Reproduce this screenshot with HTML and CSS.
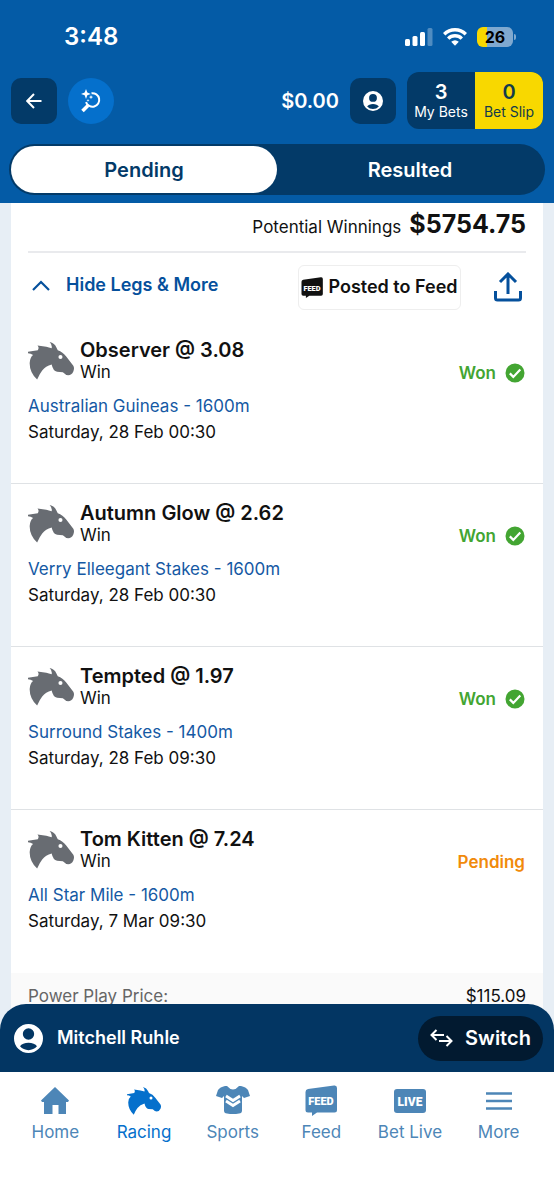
FILE: index.html
```html
<!DOCTYPE html>
<html lang="en">
<head>
<meta charset="utf-8">
<meta name="viewport" content="width=device-width, initial-scale=1">
<title>My Bets</title>
<link rel="stylesheet" href="styles.css">
</head>
<body>
<svg class="sprite" aria-hidden="true">
  <symbol id="horse" viewBox="0 0 136 112">
    <path fill="currentColor" d="M0 29L29 24Q34 16 28 10L54 14L70 18Q72 8 64 0Q79 4 84 16L88 24Q103 29 113 43L134 70Q138 77 134 87Q129 98 119 98Q112 98 103 89L86 88Q74 85 70 66Q52 70 42 84Q34 94 27 111Q4 89 5 61Q6 45 15 38Q8 33 0 33Z"/>
    <circle cx="96" cy="44" r="6" fill="#fff"/>
  </symbol>
  <symbol id="person" viewBox="0 0 24 24">
    <path fill="currentColor" fill-rule="evenodd" d="M12 0a12 12 0 1 0 0 24a12 12 0 0 0 0-24zM12 3.600a4.700 4.700 0 1 1 0 9.400a4.700 4.700 0 0 1 0-9.400zM5 18.500c2-4 12-4 14 0a9.400 9.400 0 0 1-14 0z"/>
  </symbol>
  <symbol id="tick" viewBox="0 0 20 20">
    <circle cx="10" cy="10" r="9.500" fill="#43a532"/>
    <path d="M4.800 10.400l3.500 3.500 7-7.300" fill="none" stroke="#fff" stroke-width="2.200"/>
  </symbol>
</svg>
<div class="app">
  <header class="header">
    <div class="status">
      <span class="clock">3:48</span>
      <div class="status-icons">
        <svg width="28" height="18" viewBox="0 0 28 18"><g fill="#fff"><rect y="11" width="5" height="7" rx="1.500"/><rect x="7.500" y="8" width="5" height="10" rx="1.500"/><rect x="15" y="4" width="5" height="14" rx="1.500"/><rect x="22.500" width="5" height="18" rx="1.500" opacity=".3"/></g></svg>
        <svg width="24" height="18" viewBox="0 0 24 18"><g fill="none" stroke="#fff" stroke-width="3.400"><path d="M1.200 6.200a15.500 15.500 0 0 1 21.600 0"/><path d="M5.200 10.600a9.700 9.700 0 0 1 13.600 0"/></g><path d="M8.200 13.800q3.800-3.200 7.600 0L12 17.800z" fill="#fff"/></svg>
        <div class="power"><span class="battery">26</span><i class="cap"></i></div>
      </div>
    </div>
    <div class="toolbar">
      <button class="square" aria-label="Back"><svg width="16" height="16" viewBox="0 0 16 16"><path d="M15.500 8H1.500M8 1L1.200 8L8 15" fill="none" stroke="#fff" stroke-width="2"/></svg></button>
      <button class="square round" aria-label="Search"><svg width="20" height="24" viewBox="0 0 20 24"><g fill="none" stroke="#fff"><path d="M10.500 4.200a6.800 6.800 0 1 1-5.500 9" stroke-width="2"/><path d="M7 16.500L1.500 22" stroke-width="3.600"/></g><path fill="#fff" d="M5 0l1.300 3.500L9.800 5 6.300 6.300 5 10 3.700 6.300 0 5l3.700-1.500zM10 6l.6 1.500 1.500.6-1.500.6-.6 1.500-.6-1.500-1.500-.6 1.500-.6zM7 9.800l.4 1.200 1.200.4-1.200.4L7 13l-.4-1.200-1.200-.4 1.200-.4z"/></svg></button>
      <span class="balance">$0.00</span>
      <button class="square" aria-label="Account"><svg width="20" height="20"><use href="#person"/></svg></button>
      <div class="bets">
        <button class="bet-tab"><strong>3</strong>My Bets</button>
        <button class="bet-tab slip"><strong>0</strong>Bet Slip</button>
      </div>
    </div>
    <nav class="tabs">
      <button class="tab active">Pending</button>
      <button class="tab">Resulted</button>
    </nav>
  </header>
  <main class="main">
    <article class="card">
      <div class="winnings">Potential Winnings <strong>$5754.75</strong></div>
      <div class="actions">
        <button class="hide"><svg width="18" height="11" viewBox="0 0 18 11"><path d="M1 10L9 2l8 8" fill="none" stroke="currentColor" stroke-width="2.200"/></svg>Hide Legs &amp; More</button>
        <button class="posted"><svg width="22" height="21" viewBox="0 0 32 31"><path fill="currentColor" d="M3 4L29 .5Q32 0 32 3V25Q32 27.500 29.500 27.500H12L7 31V27.500H3Q.5 27.500.5 25V7Q.5 4.500 3 4Z"/><text class="badge-text" x="16" y="20" text-anchor="middle">FEED</text></svg>Posted to Feed</button>
        <button class="share" aria-label="Share"><svg width="28" height="30" viewBox="0 0 28 30"><path d="M14 22V2M6 10l8-8 8 8M1.500 19v7q0 2 2 2h21q2 0 2-2v-7" fill="none" stroke="currentColor" stroke-width="3"/></svg></button>
      </div>
      <section class="leg">
        <div class="leg-top"><svg class="horse"><use href="#horse"/></svg><div><h2>Observer @ 3.08</h2><p class="kind">Win</p></div><span class="result">Won<svg width="20" height="20"><use href="#tick"/></svg></span></div>
        <a href="#">Australian Guineas - 1600m</a><p class="when">Saturday, 28 Feb 00:30</p>
      </section>
      <section class="leg">
        <div class="leg-top"><svg class="horse"><use href="#horse"/></svg><div><h2>Autumn Glow @ 2.62</h2><p class="kind">Win</p></div><span class="result">Won<svg width="20" height="20"><use href="#tick"/></svg></span></div>
        <a href="#">Verry Elleegant Stakes - 1600m</a><p class="when">Saturday, 28 Feb 00:30</p>
      </section>
      <section class="leg">
        <div class="leg-top"><svg class="horse"><use href="#horse"/></svg><div><h2>Tempted @ 1.97</h2><p class="kind">Win</p></div><span class="result">Won<svg width="20" height="20"><use href="#tick"/></svg></span></div>
        <a href="#">Surround Stakes - 1400m</a><p class="when">Saturday, 28 Feb 09:30</p>
      </section>
      <section class="leg">
        <div class="leg-top"><svg class="horse"><use href="#horse"/></svg><div><h2>Tom Kitten @ 7.24</h2><p class="kind">Win</p></div><span class="result waiting">Pending</span></div>
        <a href="#">All Star Mile - 1600m</a><p class="when">Saturday, 7 Mar 09:30</p>
      </section>
      <div class="price"><span>Power Play Price:</span><b>$115.09</b></div>
    </article>
  </main>
  <footer class="footer">
    <div class="account">
      <svg width="29" height="29"><use href="#person"/></svg>
      <span class="name">Mitchell Ruhle</span>
      <button class="switch"><svg width="23" height="18" viewBox="0 0 23 18"><path d="M14 6H1.500M6.500 1l-5 5 5 5M9 12h12.500M16.500 7l5 5-5 5" fill="none" stroke="currentColor" stroke-width="2"/></svg>Switch</button>
    </div>
    <nav class="nav">
      <a href="#"><svg width="28" height="28" viewBox="0 0 28 28"><path fill="currentColor" d="M14 0l14 13.500-1 1.500h-2v12h-7.500v-9h-6v9H3V15H1l-1-1.500z"/></svg>Home</a>
      <a href="#" class="current"><svg width="34" height="28"><use href="#horse"/></svg>Racing</a>
      <a href="#"><svg width="34" height="29" viewBox="0 0 34 29"><path fill="currentColor" d="M9 0h2q6 7 12 0h2q5 1 7 4l2 6-6 2-2-2v14.500q0 3-3 3-6 1-12 0-3 0-3-3V10l-2 2-6-2 2-6q2-3 7-4z"/><path d="M10 10l7 4.500 7-4.500M10 15l7 4.500 7-4.500" fill="none" stroke="#fff" stroke-width="2.800"/></svg>Sports</a>
      <a href="#"><svg width="32" height="31" viewBox="0 0 32 31"><path fill="currentColor" d="M3 4L29 .5Q32 0 32 3V25Q32 27.500 29.500 27.500H12L7 31V27.500H3Q.5 27.500.5 25V7Q.5 4.500 3 4Z"/><text class="badge-text" x="16" y="20" text-anchor="middle">FEED</text></svg>Feed</a>
      <a href="#"><svg width="32" height="24" viewBox="0 0 32 24"><rect width="32" height="24" rx="3" fill="currentColor"/><text class="badge-text live" x="16" y="17" text-anchor="middle">LIVE</text></svg>Bet Live</a>
      <a href="#"><svg width="26" height="18" viewBox="0 0 26 18"><path d="M0 1.500h26M0 9h26M0 16.500h26" stroke="currentColor" stroke-width="2.400"/></svg>More</a>
    </nav>
  </footer>
</div>
</body>
</html>
```
FILE: styles.css
```css
* { box-sizing: border-box; }
body { margin: 0; font-family: Inter, "Liberation Sans", sans-serif; font-size: 17px; line-height: 20px; color: #111; }
button { border: 0; padding: 0; background: none; color: inherit; font: inherit; cursor: pointer; }
a { text-decoration: none; color: inherit; }
h2, p { margin: 0; }
svg { flex: none; display: block; }
.sprite { position: absolute; width: 0; height: 0; }
.app { display: flex; flex-direction: column; height: 100vh; background: #e7eef5; }
.header { flex: none; background: #045ba6; color: #fff; padding-bottom: 8px; }
.status { display: flex; align-items: center; justify-content: space-between; height: 72px; padding: 2px 38px 0 64px; }
.clock { font-size: 24px; font-weight: 600; }
.status-icons { display: flex; align-items: center; gap: 10px; }
.power { display: flex; align-items: center; gap: 1px; }
.cap { width: 2px; height: 6px; border-radius: 0 2px 2px 0; background: #7fa9d0; }
.battery { width: 36px; height: 20px; border-radius: 6px; background: linear-gradient(90deg, #f8d800 10px, #7fa9d0 10px); color: #000; font-size: 16px; font-weight: 700; text-align: center; }
.toolbar { display: flex; align-items: center; height: 57px; padding: 0 11px; gap: 11px; }
.square { display: grid; place-items: center; width: 46px; height: 46px; border-radius: 10px; background: #033a68; }
.round { border-radius: 50%; background: #0570cc; }
.balance { margin-left: auto; font-size: 20px; font-weight: 600; }
.bets { display: flex; height: 57px; border-radius: 12px; overflow: hidden; background: #033a68; }
.bet-tab { display: flex; flex-direction: column; align-items: center; justify-content: center; width: 68px; font-size: 14px; line-height: 18px; }
.bet-tab strong { font-size: 20px; line-height: 22px; font-weight: 600; }
.slip { background: #f8d800; color: #123b4c; }
.tabs { display: flex; height: 51px; margin: 15px 9px 0; padding: 2px; border-radius: 26px; background: #033a68; }
.tab { flex: 1; border-radius: 24px; font-size: 20px; font-weight: 600; }
.tab.active { background: #fff; color: #033a68; }
.main { flex: 1; min-height: 0; overflow: hidden; padding: 0 11px; }
.card { background: #fff; }
.winnings { margin: 0 17px; height: 50px; padding-top: 5px; border-bottom: 2px solid #e9eaed; display: flex; align-items: baseline; justify-content: flex-end; gap: 8px; line-height: 32px; }
.winnings strong { font-size: 25px; font-weight: 700; }
.actions { display: flex; align-items: center; height: 68px; padding: 0 21px; color: #05509c; font-size: 18px; font-weight: 600; }
.hide { display: flex; align-items: center; gap: 16px; margin-right: auto; padding-bottom: 4px; }
.posted { display: flex; align-items: center; justify-content: center; gap: 5px; width: 163px; height: 45px; border: 1px solid #eee; border-radius: 6px; color: #111; white-space: nowrap; }
.share { margin-left: 33px; }
.leg { height: 163px; padding: 17px 17px 0; border-bottom: 1px solid #dfe2e5; }
.leg:nth-last-child(2) { border-bottom: 0; }
.leg-top { display: flex; height: 55px; gap: 6px; }
.horse { width: 46px; height: 38px; margin-top: 4px; color: #686c72; }
.leg h2 { font-size: 20px; line-height: 24px; font-weight: 600; }
.leg a { display: block; color: #1559a4; line-height: 26px; }
.when { line-height: 26px; }
.result { display: flex; align-items: center; gap: 9px; height: 20px; margin: 25px 1px 0 auto; color: #43a532; font-weight: 600; }
.waiting { color: #f18a0b; }
.price { display: flex; justify-content: space-between; height: 80px; padding: 13px 17px 0; background: #fafafa; color: #666; }
.price b { font-weight: 400; color: #111; }
.footer { flex: none; position: relative; margin-top: -24px; background: #fff; height: 196px; border-radius: 26px 26px 0 0; }
.account { display: flex; align-items: center; height: 68px; padding: 0 11px 0 14px; border-radius: 26px 26px 0 0; background: #033663; color: #fff; }
.name { margin: 0 auto 0 14px; font-size: 18px; font-weight: 600; }
.switch { display: flex; align-items: center; justify-content: center; gap: 12px; width: 125px; height: 45px; border-radius: 23px; background: #021a30; font-size: 20px; font-weight: 600; }
.nav { display: grid; grid-template-columns: repeat(6, 1fr); padding: 12px 11px 0; color: #4d86b7; }
.nav a { display: grid; grid-template-rows: 33px 30px; place-items: center; white-space: nowrap; }
.nav .current { color: #0570cc; }
.badge-text { fill: #fff; font: 900 11px Roboto, "Liberation Sans", sans-serif; }
.live { font-size: 12px; }
```
